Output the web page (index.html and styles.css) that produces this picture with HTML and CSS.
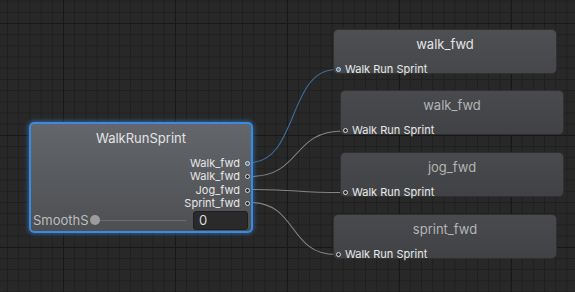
FILE: index.html
```html
<!DOCTYPE html>
<html lang="en">
<head>
    <meta charset="UTF-8">
    <meta name="viewport" content="width=device-width, initial-scale=1.0">
    <title>Blend Graph</title>
    <link rel="stylesheet" href="styles.css">
</head>
<body>
    <div class="graph">
        <svg class="edges" width="575" height="292" viewBox="0 0 575 292">
            <path class="edge active" d="M250 162.5 C298 162.5, 288 69.5, 336 69.5"/>
            <path class="edge" d="M250 176.5 C302 176.5, 291 131, 343 131"/>
            <path class="edge" d="M250 189.5 C300 189.5, 293 192.5, 343 192.5"/>
            <path class="edge" d="M250 202.5 C298 202.5, 288 254.5, 336 254.5"/>
        </svg>

        <div class="node node-blend">
            <div class="node-title">WalkRunSprint</div>
            <ul class="outputs">
                <li>Walk_fwd <span class="port linked"></span></li>
                <li>Walk_fwd <span class="port"></span></li>
                <li>Jog_fwd <span class="port"></span></li>
                <li>Sprint_fwd <span class="port"></span></li>
            </ul>
            <div class="param">
                <span class="param-label">SmoothS</span>
                <div class="slider"><span class="knob"></span></div>
                <div class="field">0</div>
            </div>
        </div>

        <div class="node node-clip clip-1">
            <div class="node-title bright">walk_fwd</div>
            <div class="input"><span class="port linked"></span> Walk Run Sprint</div>
        </div>
        <div class="node node-clip clip-2">
            <div class="node-title">walk_fwd</div>
            <div class="input"><span class="port"></span> Walk Run Sprint</div>
        </div>
        <div class="node node-clip clip-3">
            <div class="node-title">jog_fwd</div>
            <div class="input"><span class="port"></span> Walk Run Sprint</div>
        </div>
        <div class="node node-clip clip-4">
            <div class="node-title">sprint_fwd</div>
            <div class="input"><span class="port"></span> Walk Run Sprint</div>
        </div>
    </div>
</body>
</html>
```

FILE: styles.css
```css
body {
    margin: 0;
    font-family: Inter, "Noto Sans", sans-serif;
    background-color: #272727;
}
.graph {
    position: relative;
    width: 575px;
    height: 292px;
    overflow: hidden;
    background-color: #282828;
    background-image:
        linear-gradient(to right, #181818 1px, transparent 1px),
        linear-gradient(to bottom, #181818 1px, transparent 1px),
        linear-gradient(to right, #1f1f1f 1px, transparent 1px),
        linear-gradient(to bottom, #1f1f1f 1px, transparent 1px);
    background-size: 112px 112px, 112px 112px, 11.2px 11.2px, 11.2px 11.2px;
    background-position: 63px 23px, 63px 23px, 63px 23px, 63px 23px;
}
.edges {
    position: absolute;
    left: 0;
    top: 0;
}
.edge {
    fill: none;
    stroke: #858585;
    stroke-width: 1.1;
}
.edge.active {
    stroke: #3d6e9f;
}

/* nodes sit on the free canvas */
.node {
    position: absolute;
    box-sizing: border-box;
    width: 224px;
    border-radius: 5px;
    color: #e2e2e2;
}
.node-title {
    font-size: 13px;
    line-height: 18px;
    padding-top: 6px;
    text-align: center;
    color: #b4b4b4;
}
.node-title.bright {
    color: #e4e4e4;
}

.node-blend {
    left: 29px;
    top: 122px;
    height: 111px;
    border: 2px solid #3a8ae2;
    background: linear-gradient(to bottom, #63666a, #4d4f53);
    box-shadow: 0 0 4px 1px rgba(58, 140, 226, 0.55);
    display: flex;
    flex-direction: column;
}
.node-blend .node-title {
    padding-top: 5px;
    color: #e4e4e4;
}
.outputs {
    list-style-type: none;
    margin: 10px 0 0 0;
    padding: 0 1px 0 0;
}
.outputs li {
    display: flex;
    justify-content: flex-end;
    align-items: center;
    gap: 5px;
    font-size: 11px;
    height: 13.3px;
    line-height: 13px;
    color: #e6e6e6;
}
.port {
    display: inline-block;
    box-sizing: border-box;
    width: 5px;
    height: 5px;
    border-radius: 50%;
    border: 1px solid #d8d8d8;
    background-color: #2b2b2b;
}
.port.linked {
    background-color: #4a7bb0;
}

.param {
    display: flex;
    align-items: center;
    margin-top: 1px;
    padding-left: 2px;
    height: 18px;
}
.param-label {
    width: 57px;
    white-space: nowrap;
    font-size: 13px;
    color: #bdbdbd;
}
.slider {
    position: relative;
    width: 96px;
    height: 10px;
    display: flex;
    align-items: center;
}
.slider::before {
    content: "";
    flex: 1;
    height: 1px;
    background-color: #6c6c6c;
}
.knob {
    position: absolute;
    left: 0;
    top: 0;
    width: 10px;
    height: 10px;
    border-radius: 50%;
    background-color: #9c9c9c;
}
.field {
    box-sizing: border-box;
    margin-left: 7px;
    width: 55px;
    height: 19px;
    padding-left: 5px;
    border: 1px solid #1f1f1f;
    border-radius: 3px;
    background-color: #2a2a2a;
    font-size: 13px;
    line-height: 17px;
    color: #dcdcdc;
}

.node-clip {
    height: 45px;
    border: 1px solid #303030;
    background: linear-gradient(to bottom, #484a4e, #404246);
}
.node-clip .node-title {
    padding-top: 5px;
}
.clip-1 {
    left: 333px;
    top: 29px;
    background: linear-gradient(to bottom, #4d4f53, #45474b);
}
.clip-2 {
    left: 340px;
    top: 90px;
}
.clip-3 {
    left: 340px;
    top: 152px;
}
.clip-4 {
    left: 333px;
    top: 214px;
}
.input {
    display: flex;
    align-items: center;
    gap: 4px;
    margin-top: 11px;
    padding-left: 2px;
    font-size: 11px;
    line-height: 11px;
    color: #e8e8e8;
}
```
